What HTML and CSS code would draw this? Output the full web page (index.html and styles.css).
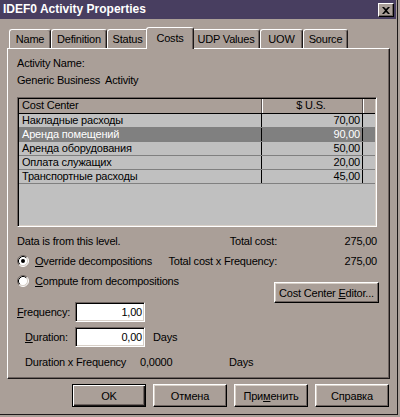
FILE: index.html
```html
<!DOCTYPE html>
<html>
<head>
<meta charset="utf-8">
<link rel="stylesheet" href="styles.css">
</head>
<body>
<div class="window">
  <div class="titlebar">
    <span class="title">IDEF0 Activity Properties</span>
    <span class="close"><svg width="8" height="7" viewBox="0 0 8 7"><path d="M0 0h2l2 2 2-2h2L5 3.5 8 7H6L4 5 2 7H0l3-3.5z" fill="#000"/></svg></span>
  </div>
  <div class="tabs">
    <div class="tab w-name">Name</div>
    <div class="tab w-def">Definition</div>
    <div class="tab w-status">Status</div>
    <div class="tab w-costs sel">Costs</div>
    <div class="tab w-udp">UDP Values</div>
    <div class="tab w-uow">UOW</div>
    <div class="tab w-src">Source</div>
  </div>
  <div class="panel">
    <div class="line">Activity Name:</div>
    <div class="line l2">Generic Business&nbsp; Activity</div>
    <div class="list">
      <div class="lrow head"><div class="c1">Cost Center</div><div class="c2">$ U.S.</div><div class="c3"></div></div>
      <div class="lrow"><div class="c1">Накладные расходы</div><div class="c2">70,00</div><div class="c3"></div></div>
      <div class="lrow selrow"><div class="c1">Аренда помещений</div><div class="c2">90,00</div><div class="c3"></div></div>
      <div class="lrow"><div class="c1">Аренда оборудования</div><div class="c2">50,00</div><div class="c3"></div></div>
      <div class="lrow"><div class="c1">Оплата служащих</div><div class="c2">20,00</div><div class="c3"></div></div>
      <div class="lrow"><div class="c1">Транспортные расходы</div><div class="c2">45,00</div><div class="c3"></div></div>
    </div>
    <div class="stats">
      <div class="srow">
        <div class="left">Data is from this level.</div>
        <div class="lab">Total cost:</div>
        <div class="val">275,00</div>
      </div>
      <div class="srow">
        <div class="left"><svg class="radio" width="12" height="12" viewBox="0 0 12 12"><circle cx="6" cy="6" r="5" fill="#fff"/><path d="M9.89 2.11A5.5 5.5 0 0 0 2.11 9.89" fill="none" stroke="#6e6460"/><path d="M9.89 2.11A5.5 5.5 0 0 1 2.11 9.89" fill="none" stroke="#fff"/><path d="M9.18 2.82A4.5 4.5 0 0 0 2.82 9.18" fill="none" stroke="#000"/><path d="M9.18 2.82A4.5 4.5 0 0 1 2.82 9.18" fill="none" stroke="#d8d0c8"/><circle cx="6" cy="6" r="2" fill="#000"/></svg><span><u>O</u>verride decompositions</span></div>
        <div class="lab">Total cost x Frequency:</div>
        <div class="val">275,00</div>
      </div>
      <div class="srow">
        <div class="left"><svg class="radio" width="12" height="12" viewBox="0 0 12 12"><circle cx="6" cy="6" r="5" fill="#fff"/><path d="M9.89 2.11A5.5 5.5 0 0 0 2.11 9.89" fill="none" stroke="#6e6460"/><path d="M9.89 2.11A5.5 5.5 0 0 1 2.11 9.89" fill="none" stroke="#fff"/><path d="M9.18 2.82A4.5 4.5 0 0 0 2.82 9.18" fill="none" stroke="#000"/><path d="M9.18 2.82A4.5 4.5 0 0 1 2.82 9.18" fill="none" stroke="#d8d0c8"/></svg><span><u>C</u>ompute from decompositions</span></div>
        <div class="btn cce"><span>Cost Center <u>E</u>ditor...</span></div>
      </div>
    </div>
    <div class="frow">
      <div class="flabel"><u>F</u>requency:</div>
      <div class="input">1,00</div>
    </div>
    <div class="frow">
      <div class="flabel indent"><u>D</u>uration:</div>
      <div class="input">0,00</div>
      <div class="days">Days</div>
    </div>
    <div class="dxf">
      <span class="dx1">Duration x Frequency</span>
      <span class="dx2">0,0000</span>
      <span>Days</span>
    </div>
  </div>
  <div class="buttons">
    <div class="btn def"><span>OK</span></div>
    <div class="btn"><span>Отмена</span></div>
    <div class="btn"><span>При<u>м</u>енить</span></div>
    <div class="btn"><span>Справка</span></div>
  </div>
</div>
</body>
</html>
```
FILE: styles.css
```css
* { box-sizing: border-box; }
body {
  margin: 0;
  background: #aa9f98;
  font-family: "Liberation Sans", Arial, sans-serif;
  font-size: 11px;
  letter-spacing: -0.2px;
  color: #000;
}
.window {
  width: 398px;
  height: 415px;
  border-right: 1px solid #1c1818;
  border-bottom: 1px solid #1c1818;
  padding-right: 1px;
}
.titlebar {
  height: 19px;
  background: #483e60;
  display: flex;
  justify-content: space-between;
  align-items: flex-start;
  padding: 0 2px 0 3px;
}
.title {
  color: #fff;
  font-weight: bold;
  font-size: 12px;
  letter-spacing: 0;
  line-height: 19px;
}
.close {
  width: 16px;
  height: 14px;
  margin-top: 3px;
  background: #aa9f98;
  border: 1px solid;
  border-color: #fff #000 #000 #fff;
  box-shadow: inset -1px -1px #6e6460;
  display: flex;
  align-items: center;
  justify-content: center;
}
.tabs {
  display: flex;
  align-items: flex-end;
  height: 21px;
  margin: 8px 0 0 9px;
}
.tab {
  height: 19px;
  border: 1px solid;
  border-bottom: none;
  border-color: #fff #1c1818 transparent #fff;
  border-radius: 3px 3px 0 0;
  box-shadow: inset -1px 0 #6e6460;
  text-align: center;
  padding-top: 3px;
  line-height: 13px;
  white-space: nowrap;
}
.w-name { width: 42px; }
.w-def { width: 56px; }
.w-status { width: 41px; }
.w-costs { width: 44px; }
.w-udp { width: 68px; }
.w-uow { width: 43px; }
.w-src { width: 45px; }
.tab.sel {
  width: 48px;
  height: 22px;
  margin: 0 -2px -1px;
  position: relative;
  z-index: 1;
  background: #aa9f98;
  padding-top: 4px;
}
.panel {
  margin-left: 7px;
  width: 383px;
  height: 331px;
  border: 1px solid;
  border-color: #fff #1c1818 #1c1818 #fff;
  box-shadow: inset -1px -1px #6e6460;
  padding: 8px 0 0 9px;
}
.line { line-height: 13px; }
.l2 { margin-top: 4px; }
.list {
  margin-top: 10px;
  width: 360px;
  height: 130px;
  background: #c0c0c0;
  border: 1px solid;
  border-color: #6e6460 #fff #fff #6e6460;
  box-shadow: inset 1px 1px #000, inset -1px -1px #d8d0c8;
  padding: 1px;
}
.lrow {
  display: flex;
  height: 14px;
  border-bottom: 1px solid #808080;
  line-height: 13px;
  white-space: nowrap;
}
.lrow.head {
  height: 15px;
  background: #aa9f98;
  border-bottom-color: #000;
}
.c1 {
  width: 243px;
  border-right: 1px solid #000;
  padding-left: 3px;
}
.c2 {
  width: 101px;
  border-right: 1px solid #000;
  text-align: right;
  padding-right: 2px;
}
.c3 { flex: 1; }
.head .c1 { border-right-color: #5a5250; }
.head .c2 {
  text-align: center;
  box-shadow: inset 1px 0 #fff;
  border-right-color: #5a5250;
}
.head .c3 { box-shadow: inset 1px 0 #fff; }
.selrow {
  background: #808080;
  color: #fff;
}
.stats {
  margin-top: 4px;
  width: 360px;
}
.srow {
  display: flex;
  height: 20px;
  line-height: 20px;
}
.left {
  flex: 1 1 0;
  min-width: 0;
  white-space: nowrap;
  display: flex;
  align-items: center;
}
.lab { white-space: nowrap; }
.val {
  width: 100px;
  text-align: right;
}
.radio {
  flex: none;
  margin: 0 6px 0 0;
}
.btn {
  width: 74px;
  height: 23px;
  border: 1px solid;
  border-color: #fff #000 #000 #fff;
  box-shadow: inset -1px -1px #6e6460, inset 1px 1px #d8d0c8;
  display: flex;
  align-items: center;
  justify-content: center;
  white-space: nowrap;
}
.btn.def {
  border-color: #000;
  box-shadow: inset 1px 1px #fff, inset -1px -1px #1c1818, inset -2px -2px #6e6460;
}
.btn.cce {
  width: 105px;
  height: 21px;
  align-self: flex-start;
  margin-top: 11px;
  margin-right: -2px;
}
.frow {
  display: flex;
  align-items: center;
  height: 20px;
  margin-top: 11px;
}
.frow + .frow { margin-top: 5px; }
.flabel { width: 58px; }
.indent { padding-left: 8px; }
.input {
  width: 70px;
  height: 20px;
  background: #fff;
  border: 1px solid;
  border-color: #6e6460 #fff #fff #6e6460;
  box-shadow: inset 1px 1px #000, inset -1px -1px #d8d0c8;
  text-align: right;
  padding-right: 2px;
  line-height: 18px;
}
.days { margin-left: 8px; }
.dxf {
  display: flex;
  margin-top: 9px;
  line-height: 13px;
  padding-left: 8px;
}
.dx1 { width: 115px; }
.dx2 { width: 89px; }
.buttons {
  display: flex;
  gap: 7px;
  margin: 5px 0 0 72px;
}
```
